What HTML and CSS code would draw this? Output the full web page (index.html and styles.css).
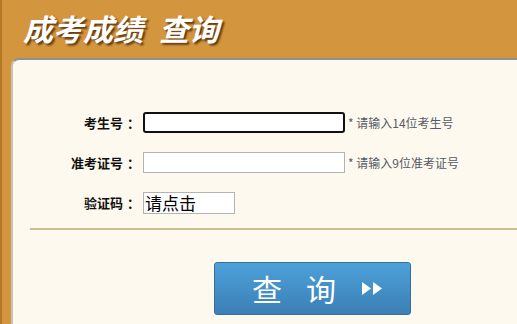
FILE: index.html
```html
<!DOCTYPE html>
<html lang="zh">
<head>
  <meta charset="UTF-8">
  <title>成考成绩查询</title>
  <link rel="stylesheet" href="styles.css">
</head>
<body>
  <div class="page">
    <h1 class="title">成考成绩<span class="title-gap">查询</span></h1>
    <div class="panel">
      <form class="query-form">
        <div class="row">
          <label class="label" for="ksh">考生号<span class="colon">：</span></label>
          <input class="field focused" id="ksh" type="text">
          <span class="hint">* 请输入14位考生号</span>
        </div>
        <div class="row">
          <label class="label" for="zkzh">准考证号<span class="colon">：</span></label>
          <input class="field" id="zkzh" type="text">
          <span class="hint">* 请输入9位准考证号</span>
        </div>
        <div class="row">
          <label class="label" for="yzm">验证码<span class="colon">：</span></label>
          <input class="field captcha" id="yzm" type="text" value="请点击">
        </div>
        <div class="divider"></div>
        <div class="actions">
          <button type="button" class="submit">
            <span>查</span>
            <span class="second">询</span>
            <svg class="arrows" width="21" height="13" viewBox="0 0 21 13">
              <path d="M0 0 L9 6.5 L0 13 Z M11 0 L20 6.5 L11 13 Z" fill="#fff"/>
            </svg>
          </button>
        </div>
      </form>
    </div>
  </div>
</body>
</html>
```

FILE: styles.css
```css
html, body {
  margin: 0;
  height: 100%;
}
body {
  background: #d4953f;
  font-family: "Noto Sans CJK SC", "Noto Sans", sans-serif;
  overflow: hidden;
}
.page {
  border-left: 2px solid #b57827;
  height: 100%;
  box-sizing: border-box;
}
.title {
  margin: 0;
  height: 58px;
  padding-left: 21px;
  font-size: 30px;
  line-height: 56px;
  font-weight: bold;
  font-style: italic;
  color: #fff;
  text-shadow: 2px 2px 2px rgba(60, 30, 0, 0.75);
}
.title-gap {
  margin-left: 16px;
}
.panel {
  margin-left: 9px;
  background: #fdf9ee;
  border-top: 2px solid #8d9196;
  border-left: 2px solid #c7c4bc;
  border-top-left-radius: 8px;
  height: calc(100% - 60px);
}
.query-form {
  padding-top: 52px;
}
.row {
  display: flex;
  align-items: center;
  height: 21px;
  margin-bottom: 19px;
}
.label {
  width: 127px;
  text-align: right;
  padding-right: 3px;
  font-size: 13px;
  font-weight: bold;
  color: #111;
}
.colon {
  margin-left: 4px;
}
.field {
  box-sizing: border-box;
  width: 202px;
  height: 21px;
  margin: 0;
  padding: 0 2px;
  border: 1px solid #b3b3b3;
  background: #fff;
  font-family: inherit;
  outline: none;
}
.field.focused {
  border: 2px solid #111;
  border-radius: 3px;
}
.captcha {
  width: 92px;
  height: 22px;
  font-size: 17px;
  color: #000;
  padding: 0 1px;
}
.hint {
  margin-left: 3px;
  font-size: 12px;
  color: #555a66;
}
.divider {
  margin: -4px 0 0 17px;
  border-top: 2px solid #c9bf91;
}
.actions {
  padding: 32px 0 0 201px;
}
.submit {
  display: flex;
  align-items: center;
  width: 197px;
  height: 53px;
  border: 1px solid #336f9f;
  border-radius: 3px;
  background: linear-gradient(#4da1d9, #3b7fb6);
  color: #fff;
  font-family: inherit;
  font-size: 30px;
  line-height: 1;
  cursor: pointer;
  padding: 0 0 2px 37px;
}
.second {
  margin-left: 24px;
}
.arrows {
  margin-left: 26px;
  margin-top: 2px;
}
```
